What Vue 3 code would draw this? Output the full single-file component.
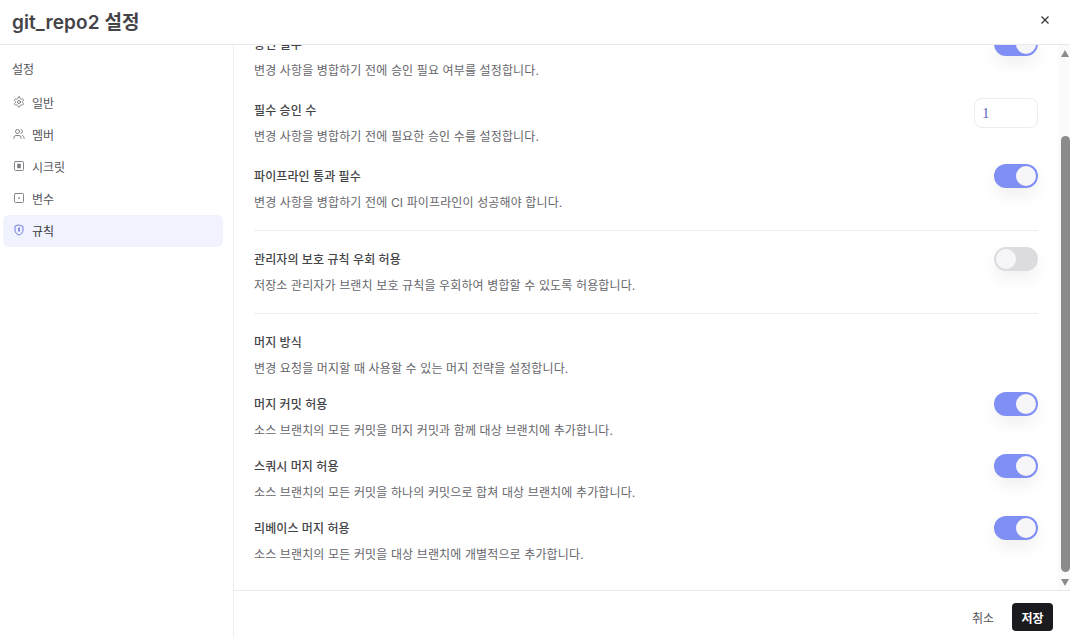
<script setup>
const nav = [
  { label: '일반', icon: 'gear' },
  { label: '멤버', icon: 'users' },
  { label: '시크릿', icon: 'secret' },
  { label: '변수', icon: 'variable' },
  { label: '규칙', icon: 'shield', active: true },
]
const groupOne = [
  { title: '승인 필수', desc: '변경 사항을 병합하기 전에 승인 필요 여부를 설정합니다.', control: 'on' },
  { title: '필수 승인 수', desc: '변경 사항을 병합하기 전에 필요한 승인 수를 설정합니다.', control: 'input' },
  { title: '파이프라인 통과 필수', desc: '변경 사항을 병합하기 전에 CI 파이프라인이 성공해야 합니다.', control: 'on' },
]
const merge = [
  { title: '머지 커밋 허용', desc: '소스 브랜치의 모든 커밋을 머지 커밋과 함께 대상 브랜치에 추가합니다.' },
  { title: '스쿼시 머지 허용', desc: '소스 브랜치의 모든 커밋을 하나의 커밋으로 합쳐 대상 브랜치에 추가합니다.' },
  { title: '리베이스 머지 허용', desc: '소스 브랜치의 모든 커밋을 대상 브랜치에 개별적으로 추가합니다.' },
]
</script>

<template>
  <div class="dialog">
    <header class="head">
      <h1 class="heading">git_repo2 설정</h1>
      <svg class="close" viewBox="0 0 12 12" width="12" height="12"><path d="M2.500 2.500l7 7M9.500 2.500l-7 7" stroke="#333" stroke-width="1.200" fill="none"/></svg>
    </header>
    <div class="body">
      <aside class="side">
        <div class="side-title">설정</div>
        <div v-for="n in nav" :key="n.label" class="nav" :class="{ active: n.active }">
          <svg class="nav-icon" viewBox="0 0 24 24" width="12" height="12" fill="none" stroke="currentColor" stroke-width="1.800" stroke-linecap="round" stroke-linejoin="round">
            <template v-if="n.icon === 'gear'">
              <path d="M12.220 2h-.44a2 2 0 0 0-2 2v.18a2 2 0 0 1-1 1.730l-.43.25a2 2 0 0 1-2 0l-.15-.08a2 2 0 0 0-2.730.73l-.22.38a2 2 0 0 0 .73 2.730l.15.1a2 2 0 0 1 1 1.720v.51a2 2 0 0 1-1 1.740l-.15.09a2 2 0 0 0-.73 2.730l.22.38a2 2 0 0 0 2.730.73l.15-.08a2 2 0 0 1 2 0l.43.25a2 2 0 0 1 1 1.730V20a2 2 0 0 0 2 2h.44a2 2 0 0 0 2-2v-.18a2 2 0 0 1 1-1.730l.43-.25a2 2 0 0 1 2 0l.15.08a2 2 0 0 0 2.730-.73l.22-.39a2 2 0 0 0-.73-2.730l-.15-.08a2 2 0 0 1-1-1.740v-.5a2 2 0 0 1 1-1.740l.15-.09a2 2 0 0 0 .73-2.730l-.22-.38a2 2 0 0 0-2.730-.73l-.15.08a2 2 0 0 1-2 0l-.43-.25a2 2 0 0 1-1-1.730V4a2 2 0 0 0-2-2z"/><circle cx="12" cy="12" r="3"/>
            </template>
            <template v-else-if="n.icon === 'users'">
              <path d="M16 21v-2a4 4 0 0 0-4-4H6a4 4 0 0 0-4 4v2"/><circle cx="9" cy="7" r="4"/><path d="M22 21v-2a4 4 0 0 0-3-3.870M16 3.130a4 4 0 0 1 0 7.750"/>
            </template>
            <template v-else-if="n.icon === 'secret'">
              <rect x="3" y="3" width="18" height="18" rx="2"/><rect x="8.500" y="7.500" width="7" height="9" rx="1.500" fill="currentColor" stroke="none"/>
            </template>
            <template v-else-if="n.icon === 'variable'">
              <rect x="3" y="3" width="18" height="18" rx="2"/><rect x="10.500" y="10.500" width="3" height="3" fill="currentColor" stroke="none"/>
            </template>
            <template v-else>
              <path d="M12 2l8 3v7c0 5-3.500 8.500-8 10-4.500-1.500-8-5-8-10V5z"/><path d="M12 8v6" stroke-width="3"/>
            </template>
          </svg>
          <span>{{ n.label }}</span>
        </div>
      </aside>
      <main class="main">
        <div class="scroll-row">
          <div class="viewport">
            <div class="content">
              <section class="group">
                <div v-for="r in groupOne" :key="r.title" class="row">
                  <div class="text">
                    <div class="title">{{ r.title }}</div>
                    <div class="desc">{{ r.desc }}</div>
                  </div>
                  <div v-if="r.control === 'input'" class="num">1</div>
                  <div v-else class="toggle on"><i class="knob"></i></div>
                </div>
              </section>
              <hr class="rule" />
              <div class="row solo">
                <div class="text">
                  <div class="title">관리자의 보호 규칙 우회 허용</div>
                  <div class="desc">저장소 관리자가 브랜치 보호 규칙을 우회하여 병합할 수 있도록 허용합니다.</div>
                </div>
                <div class="toggle"><i class="knob"></i></div>
              </div>
              <hr class="rule" />
              <div class="text merge-head">
                <div class="title">머지 방식</div>
                <div class="desc">변경 요청을 머지할 때 사용할 수 있는 머지 전략을 설정합니다.</div>
              </div>
              <section class="merge">
                <div v-for="r in merge" :key="r.title" class="row">
                  <div class="text">
                    <div class="title">{{ r.title }}</div>
                    <div class="desc">{{ r.desc }}</div>
                  </div>
                  <div class="toggle on"><i class="knob"></i></div>
                </div>
              </section>
            </div>
          </div>
          <div class="scrollbar">
            <i class="arrow up"></i>
            <div class="track"><div class="thumb"></div></div>
            <i class="arrow down"></i>
          </div>
        </div>
        <footer class="foot">
          <span class="cancel">취소</span>
          <span class="save">저장</span>
        </footer>
      </main>
    </div>
  </div>
</template>

<style>
html, body { margin: 0; background: #fff; }
</style>

<style scoped>
.dialog {
  width: 1070px; height: 637px; display: flex; flex-direction: column; overflow: hidden;
  background: #fff; color: #2b2b2f;
  font-family: Inter, "Noto Sans CJK KR", "Noto Sans", sans-serif;
}
.head {
  height: 44px; box-sizing: content-box; border-bottom: 1px solid #e9e9ec;
  display: flex; align-items: center; justify-content: space-between; padding: 0 19px 0 12px; flex: none;
}
.heading { margin: 0; font-size: 19px; font-weight: 600; color: #444448; letter-spacing: 0.1px; position: relative; top: -2px; }
.close { position: relative; top: -2px; }
.body { flex: 1; display: flex; min-height: 0; }
.side { width: 233px; flex: none; border-right: 1px solid #eeeef0; box-sizing: content-box; padding: 0; }
.side-title { font-size: 12px; color: #55555a; padding: 17px 0 0 12px; height: 25px; line-height: 16px; }
.nav {
  margin-left: 3px; width: 220px; height: 32px; display: flex; align-items: center; gap: 7px;
  padding: 0 0 2px 10px; box-sizing: border-box; font-size: 12px; color: #55555a; border-radius: 6px;
}
.nav-icon { color: #77777c; flex: none; }
.nav.active { background: #f0f2fe; color: #3a3a3e; }
.nav.active .nav-icon { color: #5f6fd8; }
.main { flex: 1; min-width: 0; display: flex; flex-direction: column; }
.scroll-row { flex: 1; min-height: 0; display: flex; }
.viewport { flex: 1; min-width: 0; overflow: hidden; padding: 0 20px; }
.content { margin-top: -8px; }
.row { display: flex; justify-content: space-between; align-items: flex-start; }
.group .row { height: 66px; }
.group .row:last-child { height: 61px; }
.title { font-size: 12px; font-weight: 500; line-height: 16px; color: #444448; letter-spacing: 0.1px; }
.desc { font-size: 12px; line-height: 16px; color: #66666b; margin-top: 10px; letter-spacing: 0.13px; }
.rule { border: 0; border-top: 1px solid #eeeef0; margin: 0; }
.solo { padding-top: 21px; height: 82px; box-sizing: border-box; }
.merge-head { padding-top: 21px; }
.merge { margin-top: 20px; }
.merge .row { height: 62px; }
.toggle {
  width: 44px; height: 24px; border-radius: 12px; background: #dcdcdf; position: relative; flex: none; margin-top: -5px;
  box-shadow: 0 8px 16px rgba(0, 0, 0, 0.06);
}
.toggle.on { background: #7f8ff4; }
.knob {
  position: absolute; left: 2px; top: 2px; width: 20px; height: 20px; border-radius: 50%;
  background: #f6f6f8; box-sizing: border-box;
}
.toggle.on .knob { left: 22px; }
.num {
  width: 64px; height: 30px; box-sizing: border-box; border: 1px solid #ececee; border-radius: 8px;
  font-family: "Liberation Serif", serif; font-size: 15px; line-height: 28px; padding-left: 7px; color: #5c6bc0; margin-top: -5px;
}
.scrollbar { width: 12px; flex: none; background: #fafafa; display: flex; flex-direction: column; }
.track { flex: 1; width: 100%; position: relative; }
.thumb { position: absolute; left: 3px; right: 0; top: 79px; bottom: 7px; background: #8b8b8b; border-radius: 5px; }
.arrow { display: block; width: 0; height: 0; border-left: 4.500px solid transparent; border-right: 4.500px solid transparent; margin-left: 3px; flex: none; }
.arrow.up { border-bottom: 7px solid #8b8b8b; margin-top: 5px; }
.arrow.down { border-top: 7px solid #8b8b8b; margin-bottom: 4px; }
.foot {
  flex: none; border-top: 1px solid #e9e9ec; display: flex; align-items: center; justify-content: flex-end;
  padding: 6px 17px 0 0; height: 40px; gap: 18px; font-size: 12px;
}
.cancel { color: #55555a; }
.save {
  width: 41px; height: 28px; background: #1b1b1f; color: #fff; border-radius: 4px; font-weight: 600;
  display: flex; align-items: center; justify-content: center;
}
</style>
